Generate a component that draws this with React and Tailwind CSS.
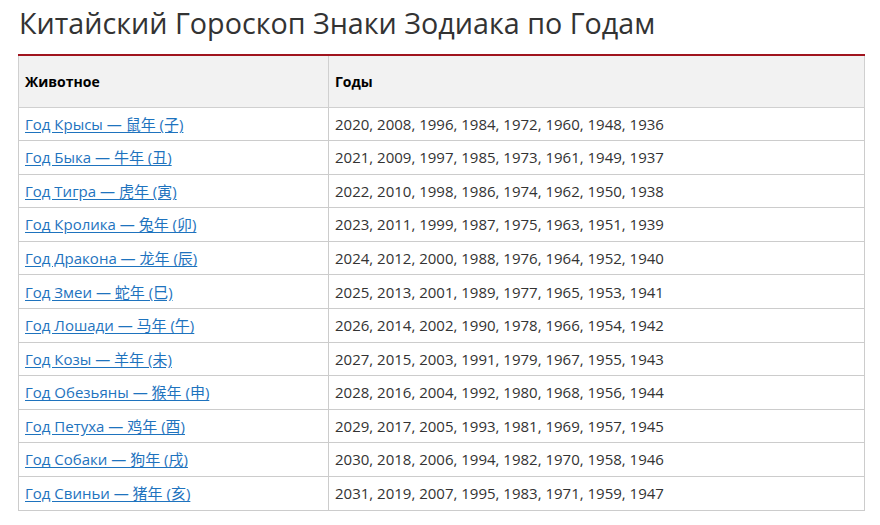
const rows = [
  ['Год Крысы — 鼠年 (子)', '2020, 2008, 1996, 1984, 1972, 1960, 1948, 1936'],
  ['Год Быка — 牛年 (丑)', '2021, 2009, 1997, 1985, 1973, 1961, 1949, 1937'],
  ['Год Тигра — 虎年 (寅)', '2022, 2010, 1998, 1986, 1974, 1962, 1950, 1938'],
  ['Год Кролика — 兔年 (卯)', '2023, 2011, 1999, 1987, 1975, 1963, 1951, 1939'],
  ['Год Дракона — 龙年 (辰)', '2024, 2012, 2000, 1988, 1976, 1964, 1952, 1940'],
  ['Год Змеи — 蛇年 (巳)', '2025, 2013, 2001, 1989, 1977, 1965, 1953, 1941'],
  ['Год Лошади — 马年 (午)', '2026, 2014, 2002, 1990, 1978, 1966, 1954, 1942'],
  ['Год Козы — 羊年 (未)', '2027, 2015, 2003, 1991, 1979, 1967, 1955, 1943'],
  ['Год Обезьяны — 猴年 (申)', '2028, 2016, 2004, 1992, 1980, 1968, 1956, 1944'],
  ['Год Петуха — 鸡年 (酉)', '2029, 2017, 2005, 1993, 1981, 1969, 1957, 1945'],
  ['Год Собаки — 狗年 (戌)', '2030, 2018, 2006, 1994, 1982, 1970, 1958, 1946'],
  ['Год Свиньи — 猪年 (亥)', '2031, 2019, 2007, 1995, 1983, 1971, 1959, 1947'],
]

export default function App() {
  return (
    <div
      className="w-[880px] h-[525px] bg-white pl-[18px] pr-[15px] overflow-hidden"
      style={{ fontFamily: '"Open Sans", "Noto Sans CJK SC", sans-serif' }}
    >
      <h1 className="text-[28.7px] leading-[40px] pt-[3px] pl-px text-[#333333] font-normal h-[54px]">
        Китайский Гороскоп Знаки Зодиака по Годам
      </h1>
      <table className="w-[847px] border-collapse border-t-2 border-t-[#a0141e] text-[15px] table-fixed">
        <colgroup>
          <col className="w-[310px]" />
          <col />
        </colgroup>
        <thead>
          <tr className="bg-[#f2f2f2] h-[52px]">
            <th className="border border-[#d0d0d0] border-t-0 text-left font-bold text-[14px] text-black px-[6px]">Животное</th>
            <th className="border border-[#d0d0d0] border-t-0 text-left font-bold text-[14px] text-black px-[6px]">Годы</th>
          </tr>
        </thead>
        <tbody>
          {rows.map(([animal, years]) => (
            <tr key={animal} className="h-[33.6px]">
              <td className="border border-[#cccccc] px-[6px] py-0">
                <a href="#" className="text-[#1e73be] underline underline-offset-2">{animal}</a>
              </td>
              <td className="border border-[#cccccc] px-[6px] py-0 text-[#333333]">{years}</td>
            </tr>
          ))}
        </tbody>
      </table>
    </div>
  )
}
